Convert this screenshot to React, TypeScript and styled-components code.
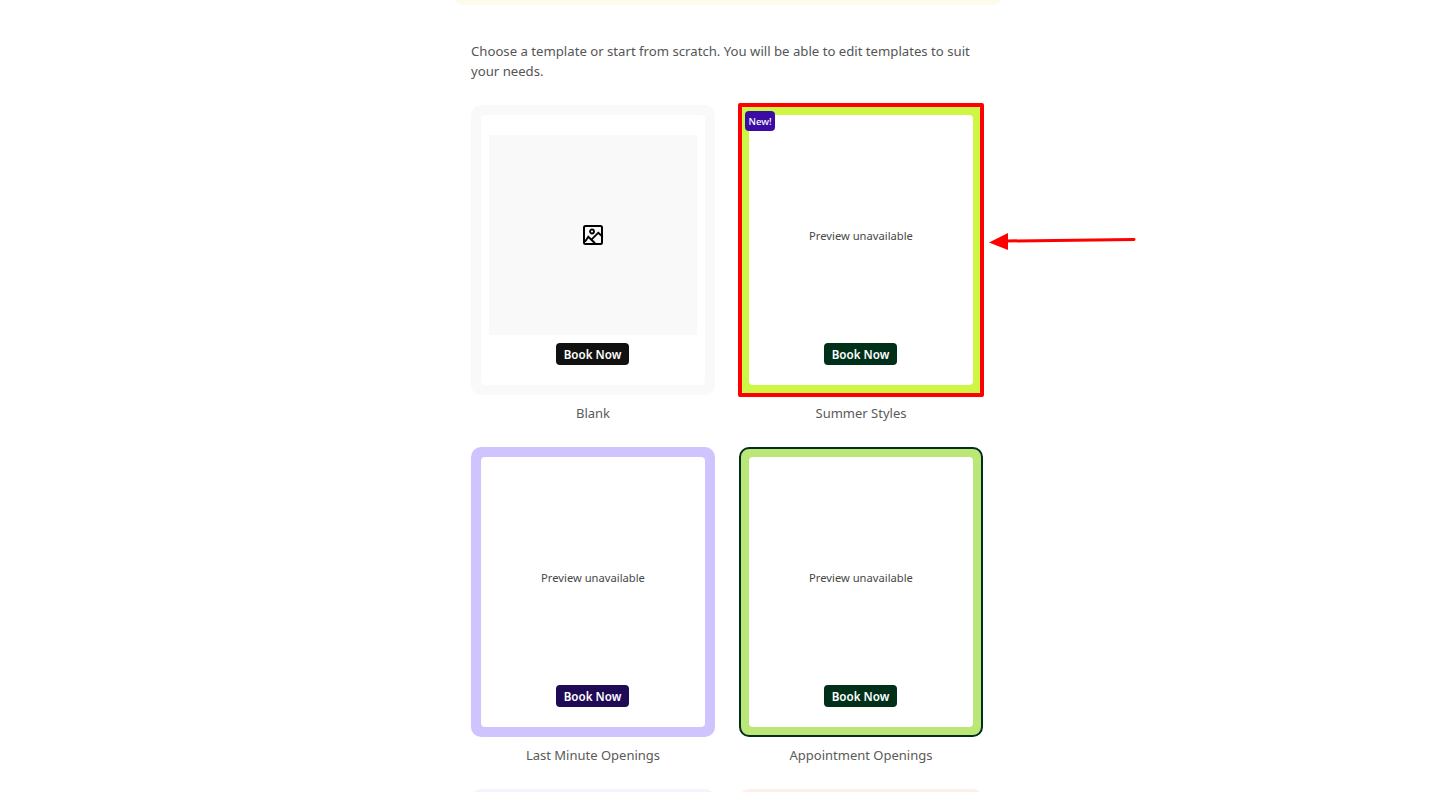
import styled, { createGlobalStyle } from 'styled-components'

const GlobalStyle = createGlobalStyle`
  html, body {
    margin: 0;
    height: 792px;
    overflow: hidden;
    background: #fff;
    font-family: "Noto Sans", "Open Sans", sans-serif;
  }
`

const Page = styled.main`
  width: 544px;
  height: 792px;
  overflow: hidden;
  margin-left: 456px;
`

const Banner = styled.div`
  height: 5px;
  background: #fffbeb;
  border-radius: 0 0 10px 10px;
`

const Content = styled.div`
  padding: 36px 15px 0;
`

const Intro = styled.p`
  margin: 0 0 24px;
  font-size: 13.17px;
  line-height: 20px;
  color: #555;
`

const Grid = styled.div`
  display: grid;
  grid-template-columns: 244px 244px;
  column-gap: 24px;
  row-gap: 24px;
`

const Item = styled.div`
  display: flex;
  flex-direction: column;
  align-items: center;
  position: relative;
`

const Card = styled.div<{ $bg: string; $border?: string }>`
  box-sizing: border-box;
  width: 244px;
  height: 290px;
  border-radius: 10px;
  background: ${({ $bg }) => $bg};
  border: ${({ $border }) => ($border ? `2px solid ${$border}` : 'none')};
  padding: ${({ $border }) => ($border ? '8px' : '10px')};
`

const Inner = styled.div`
  height: 100%;
  box-sizing: border-box;
  background: #fff;
  border-radius: 4px;
  display: flex;
  flex-direction: column;
  align-items: center;
  padding: 20px 8px;
`

const Preview = styled.div<{ $blank?: boolean }>`
  align-self: stretch;
  height: 200px;
  flex: none;
  display: flex;
  align-items: center;
  justify-content: center;
  background: ${({ $blank }) => ($blank ? '#f9f9f9' : 'transparent')};
  font-size: 11.2px;
  color: #484848;
`

const BookButton = styled.div<{ $bg: string }>`
  margin: 8px 1px 0 0;
  width: 73px;
  height: 22px;
  display: flex;
  align-items: center;
  justify-content: center;
  background: ${({ $bg }) => $bg};
  border-radius: 4px;
  color: #fff;
  font-size: 11.6px;
  font-weight: 600;
`

const Label = styled.div`
  margin-top: 9px;
  height: 19px;
  line-height: 19px;
  font-size: 13px;
  color: #5a5a5a;
`

const NewBadge = styled.div`
  position: absolute;
  top: 6px;
  left: 6px;
  width: 30px;
  height: 20px;
  display: flex;
  align-items: center;
  justify-content: center;
  background: #3a0ca3;
  border-radius: 4px;
  color: #fff;
  font-size: 9.6px;
  font-weight: 500;
`

const Highlight = styled.div`
  position: absolute;
  top: -2px;
  left: -1px;
  width: 246px;
  height: 294px;
  box-sizing: border-box;
  border: 4px solid #ff0000;
  border-radius: 2px;
  pointer-events: none;
`

const ArrowLayer = styled.div`
  position: absolute;
  top: 230px;
  left: 988px;
  line-height: 0;
`

const ImageIcon = () => (
  <svg width="22" height="22" viewBox="0 0 22 22" fill="none" stroke="#000" strokeWidth="2">
    <rect x="2" y="2" width="18" height="18" rx="1.5" />
    <circle cx="10" cy="7.5" r="2" strokeWidth="1.8" />
    <path d="M3 17.7l3.3-5 6.7 6.6M9.7 15.3l6.6-6.6 4.4 4" strokeWidth="1.9" />
  </svg>
)

type Template = {
  name?: string
  bg: string
  border?: string
  button?: string
  blank?: boolean
  badge?: boolean
  marked?: boolean
}

const templates: Template[] = [
  { name: 'Blank', bg: '#f9f9f9', button: '#111111', blank: true },
  { name: 'Summer Styles', bg: '#cdf744', button: '#00301a', badge: true, marked: true },
  { name: 'Last Minute Openings', bg: '#cfc4fd', button: '#1f0a56' },
  { name: 'Appointment Openings', bg: '#bbe678', border: '#00301a', button: '#00301a' },
  // only the top edge of this row is on screen
  { bg: '#f5f3ff' },
  { bg: '#fdf0e8' },
]

export default function App() {
  return (
    <Page>
      <GlobalStyle />
      <Banner />
      <Content>
        <Intro>
          Choose a template or start from scratch. You will be able to edit templates to suit your needs.
        </Intro>
        <Grid>
          {templates.map((t) => (
            <Item key={t.bg}>
              <Card $bg={t.bg} $border={t.border}>
                {t.button && (
                  <Inner>
                    <Preview $blank={t.blank}>{t.blank ? <ImageIcon /> : 'Preview unavailable'}</Preview>
                    <BookButton $bg={t.button}>Book Now</BookButton>
                  </Inner>
                )}
              </Card>
              {t.name && <Label>{t.name}</Label>}
              {t.badge && <NewBadge>New!</NewBadge>}
              {t.marked && <Highlight />}
            </Item>
          ))}
        </Grid>
      </Content>
      <ArrowLayer>
        <svg width="150" height="24" viewBox="0 0 150 24">
          <path d="M146 9.5L18 11" stroke="#ff0000" strokeWidth="3" strokeLinecap="round" />
          <path d="M1 12.5L20 3V20Z" fill="#ff0000" />
        </svg>
      </ArrowLayer>
    </Page>
  )
}
